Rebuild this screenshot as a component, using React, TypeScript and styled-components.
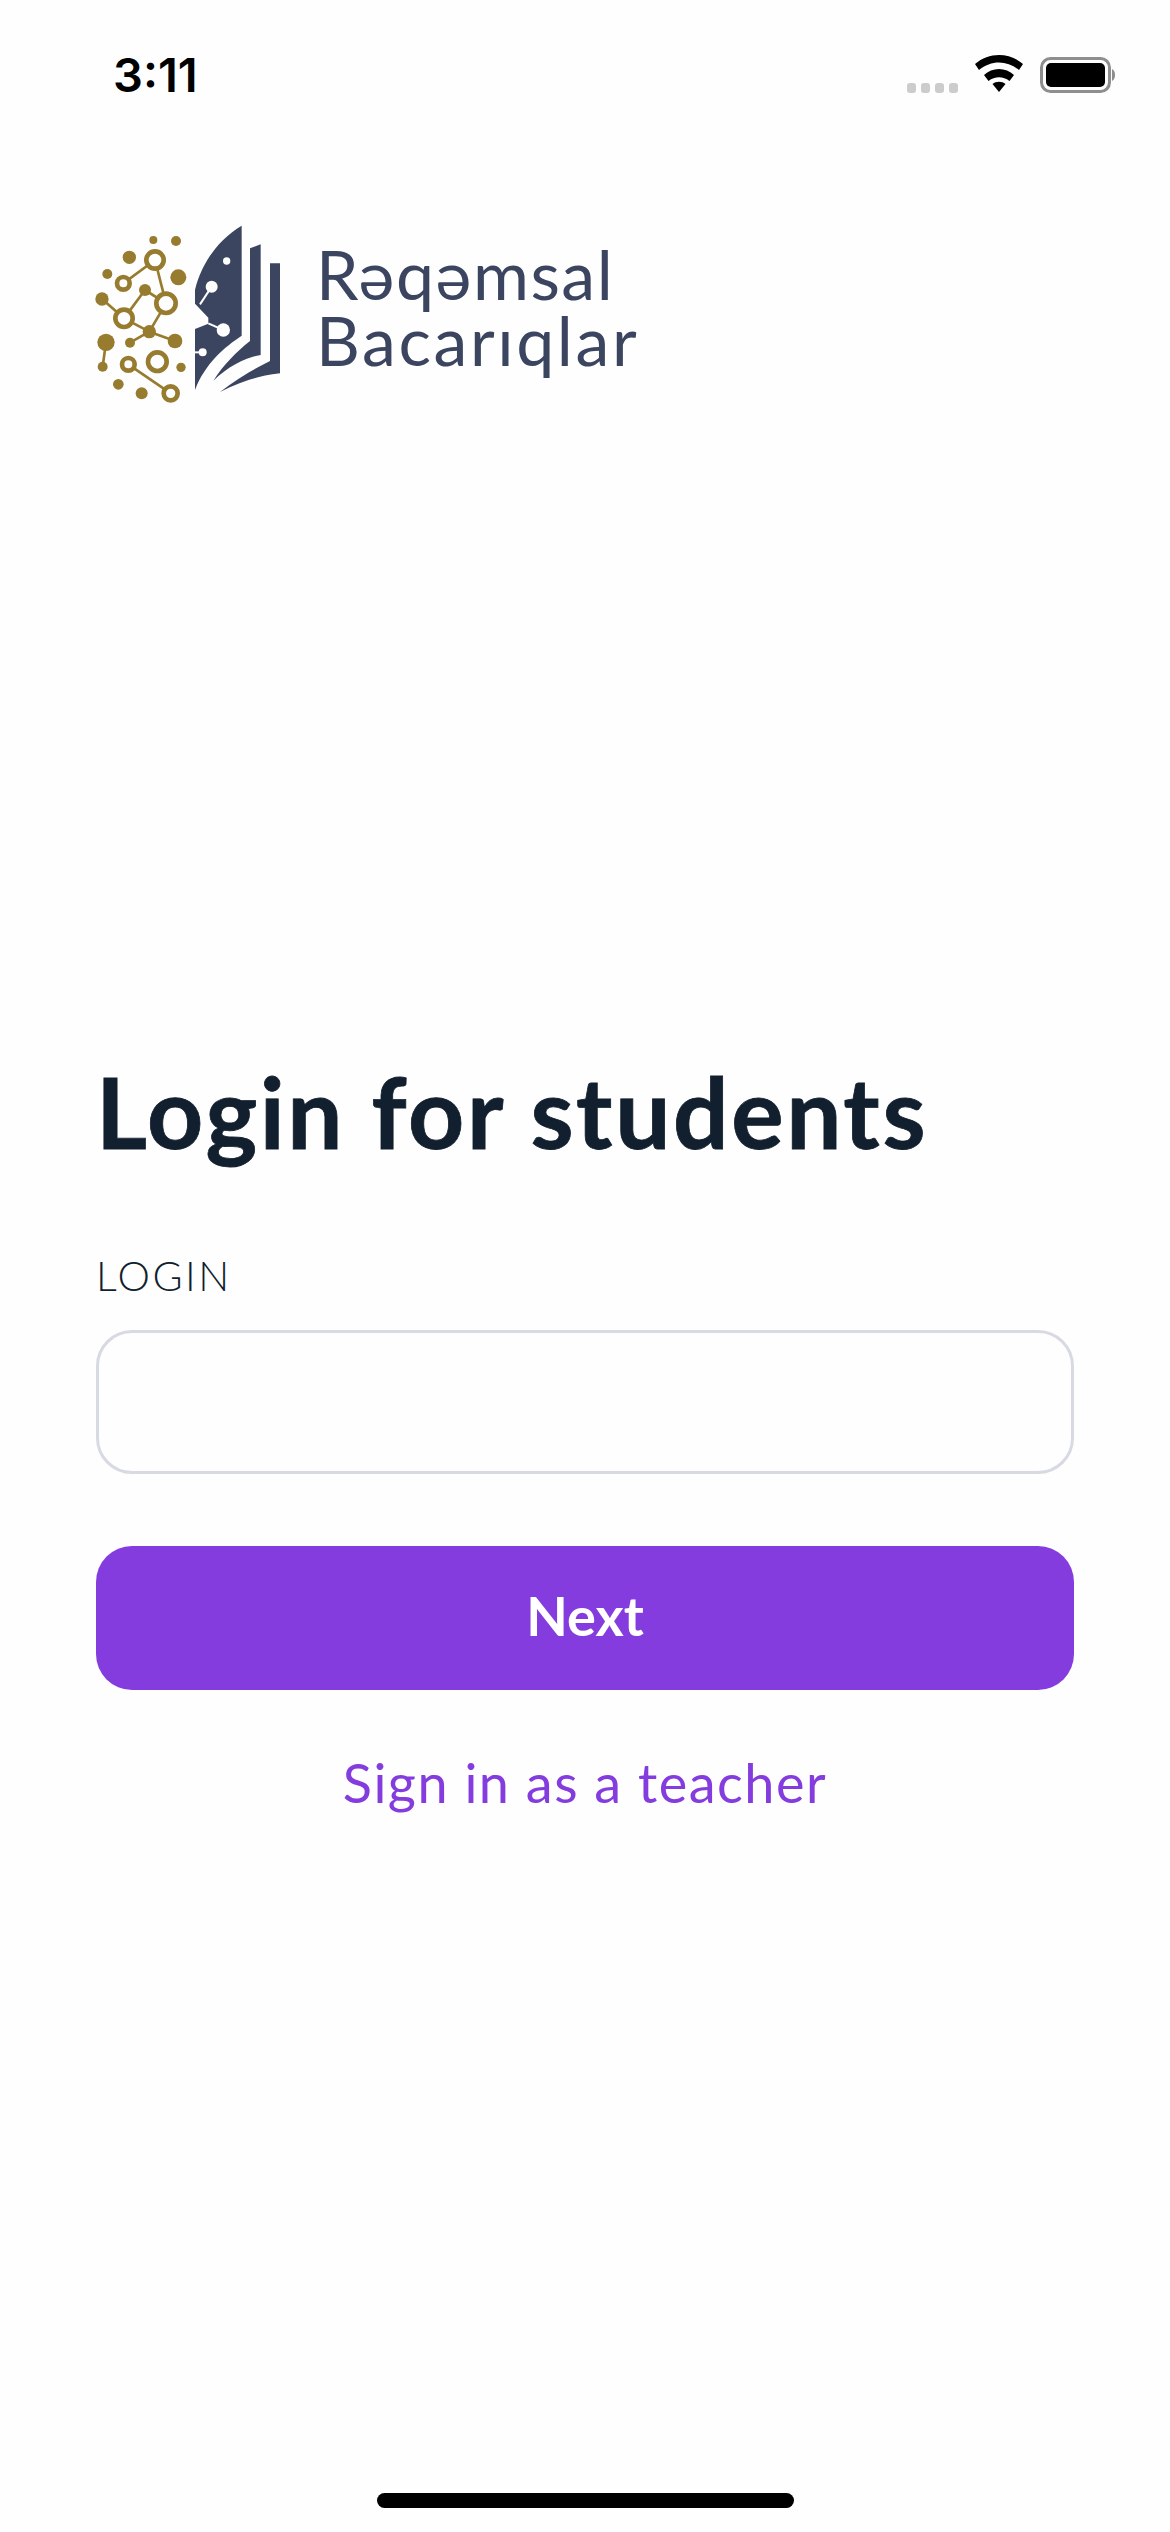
import { createGlobalStyle, styled } from 'styled-components';

const GlobalStyle = createGlobalStyle`
  html, body {
    margin: 0;
    padding: 0;
    background: #fefefe;
  }
`

const Screen = styled.div`
  width: 1170px;
  height: 2532px;
  box-sizing: border-box;
  display: flex;
  flex-direction: column;
  background: #fefefe;
  overflow: hidden;
`

const StatusBar = styled.div`
  height: 88px;
  box-sizing: border-box;
  padding: 51px 54px 0 113px;
  display: flex;
  justify-content: space-between;
  align-items: flex-start;
`

const Clock = styled.span`
  font-family: Inter, "Liberation Sans", sans-serif;
  font-size: 47px;
  font-weight: 600;
  line-height: 48px;
  color: #000;
`

const StatusIcons = styled.div`
  display: flex;
  align-items: flex-start;
  margin-top: 4px;
`

const LogoRow = styled.div`
  margin: 127px 0 0 80px;
  display: flex;
  align-items: flex-start;
  gap: 16px;
  filter: blur(0.7px);
`

const LogoText = styled.div`
  margin-top: 26px;
  display: flex;
  flex-direction: column;
`

const LogoLine = styled.span<{ $spread: number }>`
  font-family: Lato, "Liberation Sans", sans-serif;
  font-size: 68px;
  font-weight: 400;
  line-height: 66px;
  letter-spacing: ${props => props.$spread}px;
  color: #3b4560;
`

const Form = styled.div`
  margin: 0 96px;
  padding-top: 643px;
  display: flex;
  flex-direction: column;
`

const Title = styled.h1`
  margin: 0;
  font-family: Lato, "Liberation Sans", sans-serif;
  font-size: 98px;
  font-weight: 700;
  line-height: 116px;
  letter-spacing: 2.6px;
  color: #121f2e;
  -webkit-text-stroke: 0.8px #121f2e;
`

const FieldLabel = styled.label`
  margin-top: 84px;
  font-family: Lato, "Liberation Sans", sans-serif;
  font-size: 41px;
  font-weight: 300;
  line-height: 46px;
  letter-spacing: 2.5px;
  color: #121f2e;
`

const TextField = styled.input`
  margin-top: 31px;
  height: 144px;
  box-sizing: border-box;
  border: 3px solid #d8dae3;
  border-radius: 36px;
  background: #fefefe;
  outline: none;
`

const NextButton = styled.button`
  margin-top: 72px;
  height: 144px;
  padding: 0 0 6px;
  border: none;
  border-radius: 36px;
  background: #843cdf;
  color: #fff;
  font-family: Lato, "Liberation Sans", sans-serif;
  font-size: 54px;
  font-weight: 700;
`

const TeacherLink = styled.a`
  margin-top: 60px;
  text-align: center;
  font-family: Lato, "Liberation Sans", sans-serif;
  font-size: 54px;
  font-weight: 400;
  line-height: 66px;
  letter-spacing: 1.5px;
  color: #843cdf;
`

const Spacer = styled.div`
  flex: 1;
`

const HomeIndicator = styled.div`
  align-self: center;
  width: 417px;
  height: 15px;
  margin-bottom: 24px;
  border-radius: 8px;
  background: #000;
`

const rings = [
  [225, 135, 33], [130, 205, 26], [258, 265, 36], [132, 310, 33],
  [145, 448, 26], [232, 440, 35], [272, 535, 28],
]

const dots = [
  [220, 75, 12], [288, 78, 15], [148, 127, 20], [82, 177, 15], [295, 187, 24],
  [195, 225, 18], [66, 252, 20], [208, 350, 20], [78, 382, 26], [150, 383, 15],
  [285, 378, 22], [68, 455, 15], [303, 457, 14], [115, 508, 16], [185, 535, 18],
]

const links = [
  [225, 135, 130, 205], [225, 135, 258, 265], [195, 225, 132, 310], [195, 225, 258, 265],
  [66, 252, 132, 310], [132, 310, 208, 350], [258, 265, 208, 350], [208, 350, 150, 383],
  [208, 350, 285, 378], [78, 382, 68, 455], [145, 448, 272, 535],
]

const holes = [
  [440, 138, 11], [395, 215, 18], [430, 345, 20], [368, 412, 12],
]

function LogoMark()
{
  return (
    <svg width="220" height="195" viewBox="0 0 660 585">
      <g stroke="#977b2e" strokeWidth="8">
        {links.map(([x1, y1, x2, y2], i) => <line key={i} x1={x1} y1={y1} x2={x2} y2={y2} />)}
      </g>
      {dots.map(([cx, cy, r], i) => <circle key={i} cx={cx} cy={cy} r={r} fill="#977b2e" />)}
      {rings.map(([cx, cy, r], i) => (
        <circle key={i} cx={cx} cy={cy} r={r - 7} fill="#fefefe" stroke="#977b2e" strokeWidth="14" />
      ))}
      <path
        d="M485 32 L485 362 C435 395 375 445 345 525 L345 342 L385 326 L385 308 L345 266 L345 225 C365 140 420 70 485 32 Z"
        fill="#3b4560"
      />
      <path d="M510 100 L542 88 L542 420 C490 430 445 455 400 497 C430 450 470 410 510 378 Z" fill="#3b4560" />
      <path d="M570 145 L600 145 L600 475 C535 482 480 500 420 531 C465 495 515 465 570 438 Z" fill="#3b4560" />
      {holes.map(([cx, cy, r], i) => <circle key={i} cx={cx} cy={cy} r={r} fill="#fefefe" />)}
      <g stroke="#fefefe" strokeWidth="6">
        <line x1="395" y1="215" x2="360" y2="268" />
        <line x1="430" y1="345" x2="385" y2="325" />
        <line x1="368" y1="412" x2="345" y2="412" />
      </g>
    </svg>
  )
}

function StatusGlyphs()
{
  return (
    <svg width="209" height="40" viewBox="0 0 209 40">
      <g fill="#cccccc">
        <rect x="0" y="28" width="9" height="10" rx="3" />
        <rect x="14" y="28" width="9" height="10" rx="3" />
        <rect x="28" y="28" width="9" height="10" rx="3" />
        <rect x="42" y="28" width="9" height="10" rx="3" />
      </g>
      <path d="M68 9 C82 -3 102 -3 116 9 L112 15 C100 5 84 5 72 15 Z" fill="#000" />
      <path d="M77 20 C85 12 99 12 107 20 L102.500 26 C96 21 88 21 81.500 26 Z" fill="#000" />
      <path d="M85.500 29 C89 26 95 26 98.500 29 L92 37 Z" fill="#000" />
      <rect x="134.500" y="3.500" width="68" height="33" rx="9" fill="none" stroke="#8e8e8e" strokeWidth="3" />
      <rect x="139" y="8" width="59" height="24" rx="5" fill="#000" />
      <path d="M205 14 C207 15 208 17 208 20 C208 23 207 25 205 26 Z" fill="#8e8e8e" />
    </svg>
  )
}

export default function App()
{
  return (
    <Screen>
      <GlobalStyle />
      <StatusBar>
        <Clock>3:11</Clock>
        <StatusIcons>
          <StatusGlyphs />
        </StatusIcons>
      </StatusBar>
      <LogoRow>
        <LogoMark />
        <LogoText>
          <LogoLine $spread={1.5}>Rəqəmsal</LogoLine>
          <LogoLine $spread={2.6}>Bacarıqlar</LogoLine>
        </LogoText>
      </LogoRow>
      <Form>
        <Title>Login for students</Title>
        <FieldLabel>LOGIN</FieldLabel>
        <TextField type="text" />
        <NextButton>Next</NextButton>
        <TeacherLink>Sign in as a teacher</TeacherLink>
      </Form>
      <Spacer />
      <HomeIndicator />
    </Screen>
  )
}
